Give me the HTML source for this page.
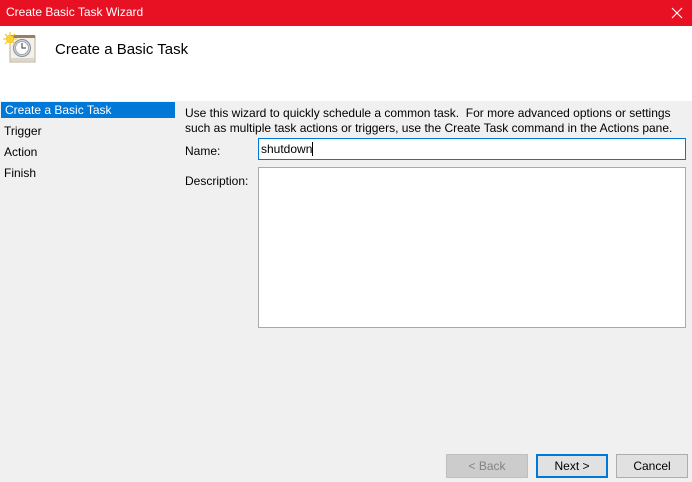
<!DOCTYPE html>
<html><head><meta charset="utf-8"><style>
*{margin:0;padding:0;box-sizing:border-box}
body{width:692px;height:482px;overflow:hidden;background:#f0f0f0;font-family:"Segoe UI","Liberation Sans",sans-serif;font-size:12px;color:#000;position:relative}
.a{position:absolute}
</style></head><body>
<div class="a" style="left:0;top:0;width:692px;height:26px;background:#e81123;color:#fff;">
 <div class="a" style="left:6px;top:5px;font-size:12px">Create Basic Task Wizard</div>
 <svg class="a" style="left:671px;top:7px" width="12" height="12"><path d="M1 1L11 11M11 1L1 11" stroke="#fff" stroke-width="1.1"/></svg>
</div>
<div class="a" style="left:0;top:26px;width:692px;height:75px;background:#fff"></div>
<svg class="a" style="left:2px;top:30px" width="36" height="34" viewBox="0 0 36 34">
 <rect x="8" y="6" width="25" height="26" fill="#f4f1ea" stroke="#b8ad9c"/>
 <rect x="8" y="5" width="25" height="3" fill="#9b7d62"/>
 <rect x="9" y="28" width="23" height="3" fill="#dcd7cd"/>
 <circle cx="20" cy="18" r="8.5" fill="#cfd6de" stroke="#8a8f96"/>
 <circle cx="20" cy="18" r="6.5" fill="#fff" stroke="#a0a8b0"/>
 <path d="M20 13V18H24" stroke="#555" stroke-width="1.2" fill="none"/>
 <circle cx="8" cy="9" r="4" fill="#f7b500"/>
 <path d="M8 2V16M1 9H15M3 4L13 14M13 4L3 14" stroke="#f7c200" stroke-width="1"/>
 <circle cx="8" cy="9" r="3.5" fill="#fbd235"/>
</svg>
<div class="a" style="left:55px;top:41px;font-size:15px">Create a Basic Task</div>
<div class="a" style="left:1px;top:102px;width:174px;height:16px;background:#0078d7;color:#fff;padding-left:4px;line-height:17px">Create a Basic Task</div>
<div class="a" style="left:4px;top:124px">Trigger</div>
<div class="a" style="left:4px;top:145px">Action</div>
<div class="a" style="left:4px;top:166px">Finish</div>
<div class="a" style="left:185px;top:106px;line-height:15px;width:500px">Use this wizard to quickly schedule a common task.&nbsp; For more advanced options or settings such as multiple task actions or triggers, use the Create Task command in the Actions pane.</div>
<div class="a" style="left:185px;top:144px">Name:</div>
<div class="a" style="left:258px;top:138px;width:428px;height:22px;background:#fff;border:1px solid #0078d7;padding:3px 0 0 2px">shutdown<span style="display:inline-block;width:1px;height:14px;background:#000;vertical-align:-3px"></span></div>
<div class="a" style="left:185px;top:174px">Description:</div>
<div class="a" style="left:258px;top:167px;width:428px;height:161px;background:#fff;border:1px solid #aaa"></div>
<div class="a" style="left:446px;top:454px;width:82px;height:24px;background:#cccccc;border:1px solid #bfbfbf;color:#838383;text-align:center;line-height:22px">&lt; Back</div>
<div class="a" style="left:536px;top:454px;width:72px;height:24px;background:#e1e1e1;border:2px solid #0078d7;text-align:center;line-height:20px">Next &gt;</div>
<div class="a" style="left:616px;top:454px;width:72px;height:24px;background:#e1e1e1;border:1px solid #adadad;text-align:center;line-height:22px">Cancel</div>
</body></html>
